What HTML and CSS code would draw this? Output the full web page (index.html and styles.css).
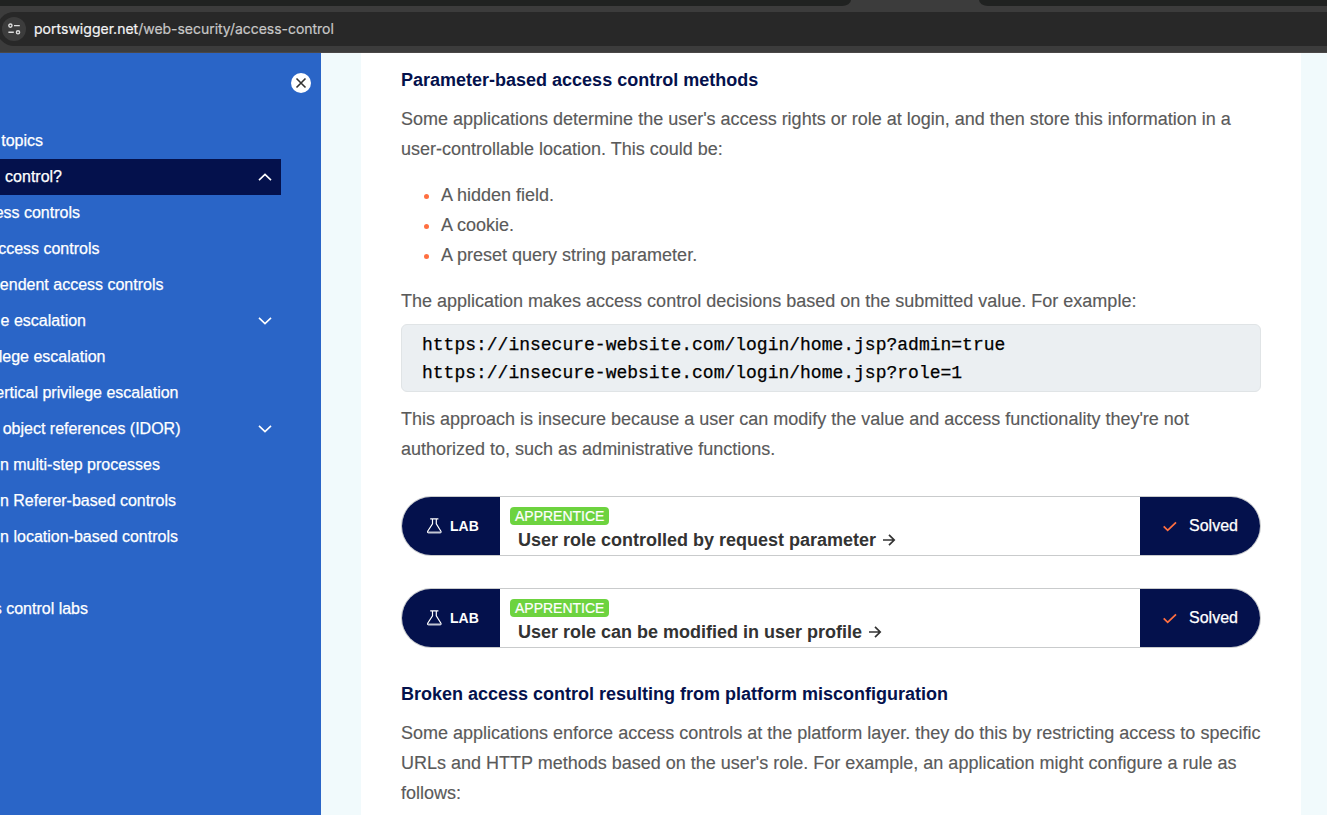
FILE: index.html
```html
<!DOCTYPE html>
<html lang="en">
<head>
<meta charset="utf-8">
<title>Access control vulnerabilities</title>
<link rel="stylesheet" href="styles.css">
</head>
<body>
<header class="browser">
  <div class="tabs"><span class="tab-left"></span><span class="tab-right"></span></div>
  <div class="omnibox">
    <span class="site-info"><svg width="14" height="12" viewBox="0 0 14 12" fill="none" stroke="#dedede" stroke-width="1.4"><circle cx="3.4" cy="2.6" r="1.6"/><path d="M7 2.6H12.8M1.4 9.3h5.4"/><circle cx="11" cy="9.3" r="1.6"/></svg></span>
    <span class="url"><b>portswigger.net</b>/web-security/access-control</span>
  </div>
</header>
<div class="page">
  <nav class="sidebar">
    <button class="close" aria-label="Close"><svg width="20" height="20" viewBox="0 0 20 20" fill="none" stroke="#333" stroke-width="1.6"><path d="M5.5 5.5l9 9M14.5 5.5l-9 9"/></svg></button>
    <ul class="menu">
      <li><span>topics</span></li>
      <li class="active"><span>control?</span><svg class="chev" viewBox="0 0 14 8"><path d="M1 7.2L7 1.4l6 5.8"/></svg></li>
      <li><span>ess controls</span></li>
      <li><span>ccess controls</span></li>
      <li><span>endent access controls</span></li>
      <li><span>e escalation</span><svg class="chev" viewBox="0 0 14 8"><path d="M1 .8l6 5.8 6-5.8"/></svg></li>
      <li><span>lege escalation</span></li>
      <li><span>ertical privilege escalation</span></li>
      <li><span>object references (IDOR)</span><svg class="chev" viewBox="0 0 14 8"><path d="M1 .8l6 5.8 6-5.8"/></svg></li>
      <li><span>n multi-step processes</span></li>
      <li><span>n Referer-based controls</span></li>
      <li><span>n location-based controls</span></li>
      <li class="labs"><span>s control labs</span></li>
    </ul>
  </nav>
  <main class="content">
    <h2>Parameter-based access control methods</h2>
    <p>Some applications determine the user's access rights or role at login, and then store this information in a<br>user-controllable location. This could be:</p>
    <ul class="bullets">
      <li>A hidden field.</li>
      <li>A cookie.</li>
      <li>A preset query string parameter.</li>
    </ul>
    <p>The application makes access control decisions based on the submitted value. For example:</p>
    <pre class="code">https://insecure-website.com/login/home.jsp?admin=true
https://insecure-website.com/login/home.jsp?role=1</pre>
    <p>This approach is insecure because a user can modify the value and access functionality they're not<br>authorized to, such as administrative functions.</p>
    <section class="lab first">
      <div class="lab-kind"><svg width="16" height="16" viewBox="0 0 16 16" fill="none" stroke="#fff" stroke-width="1.2"><path d="M4.2 .9h8.2M6.5 .9v4.9L1.7 13.2Q1.1 14.6 2.5 14.6h11.6q1.4 0 .8-1.4L10.3 5.8V.9"/><path d="M1.8 14.3h13" stroke="#c3c7d4" stroke-width="1.7"/></svg><b>LAB</b></div>
      <div class="lab-body"><span class="badge">APPRENTICE</span><a>User role controlled by request parameter<svg class="arrow" viewBox="0 0 14 14"><path d="M1 7h11M7 1.8L12.2 7 7 12.2"/></svg></a></div>
      <div class="lab-status"><svg width="16" height="12" viewBox="0 0 16 12" fill="none" stroke="#ff6f40" stroke-width="1.8"><path d="M1.7 6.3l4 4L14 2.3"/></svg><span>Solved</span></div>
    </section>
    <section class="lab">
      <div class="lab-kind"><svg width="16" height="16" viewBox="0 0 16 16" fill="none" stroke="#fff" stroke-width="1.2"><path d="M4.2 .9h8.2M6.5 .9v4.9L1.7 13.2Q1.1 14.6 2.5 14.6h11.6q1.4 0 .8-1.4L10.3 5.8V.9"/><path d="M1.8 14.3h13" stroke="#c3c7d4" stroke-width="1.7"/></svg><b>LAB</b></div>
      <div class="lab-body"><span class="badge">APPRENTICE</span><a>User role can be modified in user profile<svg class="arrow" viewBox="0 0 14 14"><path d="M1 7h11M7 1.8L12.2 7 7 12.2"/></svg></a></div>
      <div class="lab-status"><svg width="16" height="12" viewBox="0 0 16 12" fill="none" stroke="#ff6f40" stroke-width="1.8"><path d="M1.7 6.3l4 4L14 2.3"/></svg><span>Solved</span></div>
    </section>
    <h2>Broken access control resulting from platform misconfiguration</h2>
    <p>Some applications enforce access controls at the platform layer. they do this by restricting access to specific<br>URLs and HTTP methods based on the user's role. For example, an application might configure a rule as<br>follows:</p>
  </main>
</div>
</body>
</html>
```
FILE: styles.css
```css
* { box-sizing: border-box; }
body {
  margin: 0;
  height: 815px;
  overflow: hidden;
  display: flex;
  flex-direction: column;
  font-family: "Liberation Sans", Arial, sans-serif;
}
.browser {
  height: 53px;
  flex: none;
  background: #3c3c3c;
  border-bottom: 1px solid #4a4747;
}
.tabs { height: 6px; display: flex; justify-content: space-between; }
.tab-left, .tab-right { background: #202221; height: 6px; }
.tab-left { width: 851px; border-bottom-right-radius: 9px 6px; }
.tab-right { width: 348px; border-bottom-left-radius: 9px 6px; }
.omnibox {
  margin: 6px 0 0 -3px;
  height: 34px;
  padding-left: 5px;
  display: flex;
  align-items: center;
  gap: 8px;
  background: #282828;
  border-radius: 17px 0 0 17px;
}
.site-info {
  width: 24px;
  height: 24px;
  border-radius: 50%;
  background: #3c3c3c;
  display: flex;
  align-items: center;
  justify-content: center;
}
.url {
  font: 14px/20px Inter, sans-serif;
  letter-spacing: -0.03px;
  color: #c7c7c7;
  -webkit-text-stroke: 0.2px;
  white-space: nowrap;
}
.url b { font-weight: 400; color: #f4f4f4; letter-spacing: 0.02px; }

.page { flex: 1; min-height: 0; display: flex; background: #f1fafc; }
.sidebar {
  width: 321px;
  flex: none;
  display: flex;
  flex-direction: column;
  background: #2a65c7;
  color: #fff;
  overflow: hidden;
}
.close {
  align-self: flex-end;
  margin: 20px 10px 30px 0;
  width: 20px;
  height: 20px;
  padding: 0;
  border: 0;
  border-radius: 50%;
  background: #fff;
}
.close svg { display: block; }
.menu { list-style: none; margin: 0; padding: 0; width: 281px; }
.menu li {
  height: 36px;
  display: flex;
  align-items: center;
  justify-content: space-between;
  padding-right: 9px;
  font-size: 16px;
  line-height: 20px;
  -webkit-text-stroke: 0.25px;
  white-space: nowrap;
}
.menu span { display: flex; justify-content: flex-end; flex: none; padding-bottom: 1px; }
.menu .active { background: #04114c; }
.menu .labs { margin-top: 36px; }
.menu li:nth-child(1) span { width: 43px; }
.menu li:nth-child(2) span { width: 62px; }
.menu li:nth-child(3) span { width: 80px; }
.menu li:nth-child(4) span { width: 99.5px; }
.menu li:nth-child(5) span { width: 163.5px; }
.menu li:nth-child(6) span { width: 86px; }
.menu li:nth-child(7) span { width: 105.5px; }
.menu li:nth-child(8) span { width: 178.5px; }
.menu li:nth-child(9) span { width: 180.5px; }
.menu li:nth-child(10) span { width: 160px; }
.menu li:nth-child(11) span { width: 176px; }
.menu li:nth-child(12) span { width: 178px; }
.menu li:nth-child(13) span { width: 88px; }
.chev { width: 14px; height: 8px; fill: none; stroke: #fff; stroke-width: 1.6; }

.content {
  width: 940px;
  margin-left: 40px;
  padding: 12px 40px 0;
  background: #fff;
  color: #5a5a5a;
  font-size: 18px;
  line-height: 30px;
}
.content h2 { margin: 0 0 9px; font-size: 18px; line-height: 30px; color: #04114c; }
.content p { margin: 0; white-space: nowrap; -webkit-text-stroke: 0.15px; }
.bullets { list-style: none; margin: 16px 0; padding: 0 0 0 23px; -webkit-text-stroke: 0.15px; }
.bullets li { display: flex; align-items: center; gap: 12px; }
.bullets li::before { content: ""; width: 5px; height: 5px; margin-top: 3px; border-radius: 50%; background: #ff6f40; }
.code {
  height: 68px;
  margin: 8px 0 12px;
  padding: 6px 20px;
  background: #ebeff2;
  border: 1px solid #e0e4e6;
  border-radius: 6px;
  color: #000;
  font: 18px/28px "Liberation Mono", "Courier New", monospace;
  -webkit-text-stroke: 0.25px;
}
.lab {
  height: 60px;
  display: flex;
  margin-bottom: 32px;
  border: 1px solid #c9cbcc;
  border-radius: 30px;
  overflow: hidden;
}
.lab.first { margin-top: 32px; }
.lab + h2 { margin-top: -1px; }
.lab-kind {
  width: 98px;
  background: #04114c;
  color: #fff;
  display: flex;
  align-items: center;
  padding-left: 24px;
  gap: 8px;
  font-size: 14px;
}
.lab-body { flex: 1; padding: 10px 0 0 10px; display: flex; flex-direction: column; align-items: flex-start; }
.badge {
  height: 18px;
  padding: 0 5px;
  border-radius: 4px;
  background: #6dd33f;
  color: #fff;
  font-size: 14px;
  line-height: 18px;
  -webkit-text-stroke: 0.2px;
}
.lab-body a { margin: 1px 0 0 8px; color: #333; font-weight: 700; line-height: 28px; display: flex; align-items: center; }
.arrow { width: 14px; height: 14px; margin-left: 6px; fill: none; stroke: #333; stroke-width: 1.7; }
.lab-status {
  width: 120px;
  background: #04114c;
  color: #fff;
  display: flex;
  align-items: center;
  padding-left: 22px;
  gap: 11px;
  font-size: 16px;
  -webkit-text-stroke: 0.25px;
}
```
